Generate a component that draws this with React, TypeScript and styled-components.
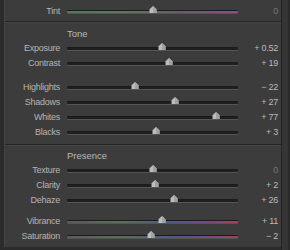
import React from 'react'
import styled, { createGlobalStyle } from 'styled-components'

const GlobalStyle = createGlobalStyle`
  html, body {
    margin: 0;
    padding: 0;
    background: #2b2b2b;
  }
`

type Track = 'plain' | 'tint' | 'color'

interface SliderRow {
  label: string
  value: string
  pos: number
  dim?: boolean
  track?: Track
}

const tint: SliderRow[] = [{ label: 'Tint', value: '0', pos: 0.503, dim: true, track: 'tint' }]

const toneTop: SliderRow[] = [
  { label: 'Exposure', value: '+ 0.52', pos: 0.556 },
  { label: 'Contrast', value: '+ 19', pos: 0.596 },
]

const toneBottom: SliderRow[] = [
  { label: 'Highlights', value: '\u2212 22', pos: 0.398 },
  { label: 'Shadows', value: '+ 27', pos: 0.632 },
  { label: 'Whites', value: '+ 77', pos: 0.871 },
  { label: 'Blacks', value: '+ 3', pos: 0.52 },
]

const presenceTop: SliderRow[] = [
  { label: 'Texture', value: '0', pos: 0.503, dim: true },
  { label: 'Clarity', value: '+ 2', pos: 0.515 },
  { label: 'Dehaze', value: '+ 26', pos: 0.626 },
]

const presenceBottom: SliderRow[] = [
  { label: 'Vibrance', value: '+ 11', pos: 0.556, track: 'color' },
  { label: 'Saturation', value: '\u2212 2', pos: 0.491, track: 'color' },
]

const Frame = styled.div`
  width: 290px;
  height: 250px;
  display: flex;
  background: #2b2b2b;
  font-family: "Liberation Sans", Arial, sans-serif;
  overflow: hidden;
`

const Panel = styled.div`
  margin-left: 4px;
  width: 277px;
  height: 247px;
  background: #3c3c3c;
  border-left: 1px solid #444;
  box-sizing: border-box;
  display: flex;
  flex-direction: column;
`

const Scroll = styled.div`
  width: 9px;
  height: 250px;
  background: #353535;
  border-left: 1px solid #242424;
  box-sizing: border-box;
  display: flex;
  justify-content: flex-end;
`

const ScrollEdge = styled.div`
  width: 2px;
  height: 100%;
  background: #2a2a2a;
`

const Section = styled.div<{ $top: number; $bottom: number; $divider?: boolean }>`
  padding: ${p => p.$top}px 0 ${p => p.$bottom}px;
  border-top: ${p => (p.$divider ? '1px solid #242424' : 'none')};
  box-shadow: ${p => (p.$divider ? 'inset 0 1px 0 #464646' : 'none')};
  display: flex;
  flex-direction: column;
`

const Header = styled.div`
  height: 13px;
  line-height: 13px;
  padding-left: 62px;
  font-size: 9.5px;
  color: #b8b8b8;
`

const Spacer = styled.div<{ $h: number }>`
  height: ${p => p.$h}px;
`

const Row = styled.div`
  height: 15px;
  display: grid;
  grid-template-columns: 55px 171px 33px;
  column-gap: 7px;
  align-items: center;
  font-size: 9px;
  letter-spacing: -0.25px;
  color: #b4b4b4;
`

const Label = styled.span`
  text-align: right;
  white-space: nowrap;
`

const Value = styled.span<{ $dim?: boolean }>`
  text-align: right;
  white-space: nowrap;
  color: ${p => (p.$dim ? '#767676' : '#bababa')};
`

const trackColors: Record<Track, string> = {
  plain: '#1f1f1f',
  tint: 'linear-gradient(90deg, #4f7d4f 0%, #5c765c 35%, #6a5a6e 65%, #8a4f8c 100%)',
  color: 'linear-gradient(90deg, #5a5a58 0%, #5b6e5a 30%, #4d5a86 60%, #6e4a8a 80%, #a4434f 100%)',
}

const TrackBox = styled.div`
  position: relative;
  height: 15px;
`

const Line = styled.div<{ $track: Track }>`
  position: absolute;
  left: 0;
  right: 0;
  top: 7px;
  height: 2px;
  border-radius: 1px;
  background: ${p => trackColors[p.$track]};
  border-top: 1px solid #1b1b1b;
  box-shadow: 0 1px 0 #555;
`

const Thumb = styled.svg`
  position: absolute;
  top: 3px;
  width: 8px;
  height: 7px;
  margin-left: -4px;
`

const Slider = ({ row }: { row: SliderRow }) => (
  <Row>
    <Label>{row.label}</Label>
    <TrackBox>
      <Line $track={row.track || 'plain'} />
      <Thumb viewBox="0 0 8 7" style={{ left: `${row.pos * 100}%` }}>
        <polygon points="4,0 7.5,3.2 7.5,7 0.5,7 0.5,3.2" fill="#bdbdbd" />
        <polygon points="4,0 7.5,3.2 7.5,7 4,7" fill="#a2a2a2" />
      </Thumb>
    </TrackBox>
    <Value $dim={row.dim}>{row.value}</Value>
  </Row>
)

const Rows = ({ rows }: { rows: SliderRow[] }) => (
  <>
    {rows.map(r => (
      <Slider key={r.label} row={r} />
    ))}
  </>
)

export default function App() {
  return (
    <Frame>
      <GlobalStyle />
      <Panel>
        <Section $top={3} $bottom={3}>
          <Rows rows={tint} />
        </Section>
        <Section $top={5} $bottom={5} $divider>
          <Header>Tone</Header>
          <Rows rows={toneTop} />
          <Spacer $h={9} />
          <Rows rows={toneBottom} />
        </Section>
        <Section $top={4} $bottom={3} $divider>
          <Header>Presence</Header>
          <Rows rows={presenceTop} />
          <Spacer $h={6} />
          <Rows rows={presenceBottom} />
        </Section>
      </Panel>
      <Scroll>
        <ScrollEdge />
      </Scroll>
    </Frame>
  )
}
